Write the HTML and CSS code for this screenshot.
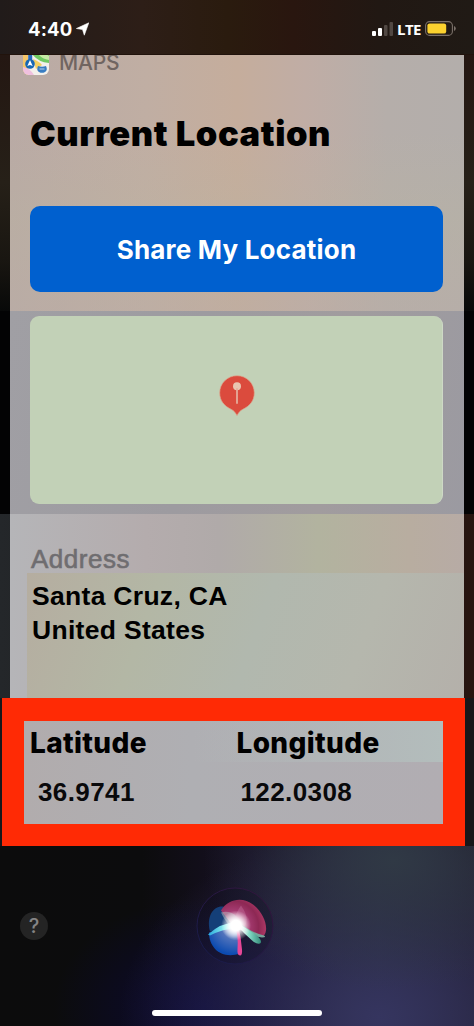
FILE: index.html
```
<!DOCTYPE html>
<html lang="en">
<head>
<meta charset="utf-8">
<title>Current Location</title>
<link rel="stylesheet" href="styles.css">
</head>
<body>
<main class="phone">
  <header class="status">
    <div class="clock">4:40
      <svg class="arrow" viewBox="0 0 13 14" width="13" height="14"><path d="M12.800.8 8.300 13.200 6.500 7.500.4 6.500z" fill="#fff" stroke="#fff" stroke-width=".6" stroke-linejoin="round"/></svg>
    </div>
    <div class="signals">
      <svg viewBox="0 0 21 14" width="21" height="14"><rect y="9" width="4" height="5" rx="1" fill="#fff"/><rect x="6" y="6" width="4" height="8" rx="1" fill="#fff"/><rect x="12" y="3" width="3.500" height="11" rx="1" fill="#514843"/><rect x="17.500" width="3.500" height="14" rx="1" fill="#514843"/></svg>
      <span class="lte">LTE</span>
      <svg viewBox="0 0 31 15" width="31" height="15"><rect x=".6" y=".6" width="26.8" height="13.8" rx="4" fill="none" stroke="#7b716a" stroke-width="1.1"/><rect x="2.4" y="2.4" width="18.8" height="10.2" rx="2.2" fill="#fcd22f"/><path d="M29 5q1.8.8 1.8 2.5T29 10z" fill="#7b716a"/></svg>
    </div>
  </header>

  <section class="row row-top">
    <div class="card card-top">
      <div class="app">
        <svg class="app-icon" viewBox="0 0 26 26" width="26" height="26">
          <defs><clipPath id="tile"><rect width="26" height="26" rx="6"/></clipPath></defs>
          <g clip-path="url(#tile)">
            <rect width="26" height="26" fill="#f3f0eb"/>
            <path d="M0 0h5v26H0z" fill="#f5c66a"/>
            <path d="M0 18q7 1 11 8H0z" fill="#efc0df"/>
            <path d="M9 0h17v14Q15 13 9 5z" fill="#70ca62"/>
            <path d="M13 0h8q1 5 5 7v4Q15 9 13 0z" fill="#c6eaa5"/>
            <path d="M10 10q7 3 9 6l-6 4z" fill="#f2cf62"/>
            <path d="M5.2 0h4v15h-4z" fill="#2769bd"/>
            <circle cx="7" cy="15" r="4.8" fill="#1767b5"/>
            <path d="m7 11 2.7 6L7 16l-2.7 1z" fill="#fff"/>
            <path d="M15 17q4 1.600 8 0 2 4-1 6-3 1.700-6 0-3-2-1-6" fill="#397dc2"/>
            <path d="M16.500 20h5" stroke="#8fb6dc" stroke-width="1.500"/>
          </g>
        </svg>
        <span class="app-name">MAPS</span>
      </div>
      <h1 class="title">Current Location</h1>
      <button class="share"><span class="share-text">Share My Location</span></button>
    </div>
  </section>

  <section class="row row-map">
    <div class="card card-map">
      <div class="map">
        <svg viewBox="0 0 36 42" width="36" height="42"><path d="M18 .7C8.300.7.7 8.300.7 17.800c0 8 4.500 13.300 11.800 16.700 2.300 1.100 3.700 2.900 5.500 6.100 1.800-3.200 3.200-5 5.500-6.100 7.300-3.400 11.800-8.700 11.800-16.700C35.300 8.300 27.700.7 18 .7z" fill="#db4b3d" stroke="#dba98f" stroke-width=".7"/><circle cx="18" cy="11.200" r="4" fill="#e9c5b0"/><path d="M18 14v14" stroke="#e5ad9b" stroke-width="1.800" stroke-linecap="round"/></svg>
      </div>
    </div>
  </section>

  <section class="row row-address">
    <div class="card card-address">
      <h2 class="label">Address</h2>
      <div class="address"><span class="city">Santa Cruz, CA</span><br><span class="country">United States</span></div>
    </div>
  </section>

  <section class="coords">
    <dl class="grid">
      <div class="cell"><dt><span class="lat">Latitude</span></dt><dd><span class="lat-value">36.9741</span></dd></div>
      <div class="cell"><dt><span class="lon">Longitude</span></dt><dd><span class="lon-value">122.0308</span></dd></div>
    </dl>
  </section>

  <footer class="footer">
    <div class="controls">
      <button class="help"><span>?</span></button>
      <svg class="orb" viewBox="0 0 80 80" width="80" height="80">
        <defs>
          <radialGradient id="pink" gradientUnits="userSpaceOnUse" cx="36" cy="38" r="32"><stop offset="0" stop-color="#ffd4ee"/><stop offset=".45" stop-color="#a83e75"/><stop offset=".8" stop-color="#8d2854"/><stop offset="1" stop-color="#a83562"/></radialGradient>
          <radialGradient id="blue" gradientUnits="userSpaceOnUse" cx="37" cy="37" r="29"><stop offset="0" stop-color="#fff"/><stop offset=".45" stop-color="#5274bc"/><stop offset="1" stop-color="#0c4bb0"/></radialGradient>
          <radialGradient id="glow"><stop offset="0" stop-color="#fff"/><stop offset=".35" stop-color="#fff"/><stop offset="1" stop-color="#fff" stop-opacity="0"/></radialGradient>
          <linearGradient id="teal" x1="0" x2="1"><stop offset="0" stop-color="#27a8dc"/><stop offset=".55" stop-color="#8cf0ef"/><stop offset="1" stop-color="#fff"/></linearGradient>
          <linearGradient id="mint" x1="0" x2="1"><stop offset="0" stop-color="#fff"/><stop offset=".5" stop-color="#82d9c4"/><stop offset="1" stop-color="#338a78"/></linearGradient>
          <linearGradient id="ring" x1="0" y1="1" x2="1" y2="0"><stop stop-color="#151d4c"/><stop offset="1" stop-color="#35143a"/></linearGradient>
        </defs>
        <circle cx="39" cy="40" r="38" fill="#090819" fill-opacity=".2" stroke="url(#ring)" stroke-width="1"/>
        <g transform="translate(1 2.500)">
          <path d="M13 43C9 27 17 17 26 18c8 2 12 15 15 24z" fill="#143f78"/>
          <path d="M12 44 40 36 43 65C25 71 12 60 12 44z" fill="url(#blue)"/>
          <path d="M24 22C31 10 46 8 56 16c9 7 14 18 13 26q-1 8-8 6L37 39z" fill="url(#pink)"/>
          <path d="M24 24q15-4 24 17-15 3-24-17" fill="#b4b4bb" fill-opacity=".55"/>
          <path d="M44 17q12 17-1 25-10-10 1-25" fill="#cf82a8" fill-opacity=".35"/>
          <path d="M11 46q13-12 28-12l3 6q-14-1-29 7" fill="url(#teal)"/>
          <path d="M42 34q14 11 25 13 3 2-2 2-14-2-23-9" fill="#75a69b"/>
          <path d="M43 36 60 47q6 6 3 8-4 1-9-4-8-7-13-13" fill="url(#mint)"/>
          <path d="M41 36q3 12 4 25 .500 6-2 6-3 0-2.500-7 1-12-2.500-23" fill="#e74797"/>
          <circle cx="39" cy="37" r="15" fill="url(#glow)"/>
        </g>
      </svg>
    </div>
    <div class="home"></div>
  </footer>
</main>
</body>
</html>
```
FILE: styles.css
```
* { box-sizing: border-box; }
body { margin: 0; background: #0d0d0d; }
h1, h2, dl, dd { margin: 0; }
button { border: 0; padding: 0; }
.phone {
  width: 474px; height: 1026px; overflow: hidden;
  display: flex; flex-direction: column;
  font-family: Inter, "Liberation Sans", sans-serif; color: #000;
}
.status {
  height: 55px; flex: none; padding: 3px 18px 0 28px;
  display: flex; justify-content: space-between; align-items: center;
  background: linear-gradient(90deg, #211b1a, #2d1e17 30%, #2a1b0e 48%, #29160f 62%, #211813 80%, #201a15);
  border-bottom: 1px solid #21130c;
}
.clock { display: flex; align-items: center; gap: 4px; color: #fff; font-size: 18.500px; font-weight: 700; letter-spacing: .2px; }
.signals { display: flex; align-items: center; gap: 4px; color: #fff; }
.lte { font-family: "Open Sans", sans-serif; font-size: 15px; font-weight: 700; line-height: 16px; letter-spacing: -.5px; }
.row { flex: none; padding: 0 10px; }
.row-top { height: 256px; background: linear-gradient(#241712, #262018 50%, #191611 80%, #080909); }
.card { height: 100%; }
.card-top {
  overflow: hidden; padding: 0 20.500px 0 20px;
  background:
    linear-gradient(180deg, transparent 30%, rgba(186,180,160,.35) 65%, rgba(186,174,165,.45)),
    linear-gradient(90deg, #b9aaa5, #c0aea3 30%, #c5ad9c 50%, #c0ada5 65%, #b5aeaa 83%, #b3aeab);
}
.app { display: flex; align-items: center; gap: 10px; height: 26px; margin: -6px 0 0 -7px; }
.app-name { font-size: 21px; line-height: 26px; padding-top: 1px; color: #706561; font-weight: 500; letter-spacing: -.2px; }
.app-icon { flex: none; }
.title { margin-top: 37px; font-size: 34.500px; line-height: 44px; font-weight: 900; letter-spacing: .58px; white-space: nowrap; }
.share {
  display: flex; align-items: center; justify-content: center;
  width: 413px; height: 86px; margin-top: 50px; padding-top: 1px; border-radius: 10px;
  background: #0060cf; color: #fff; font: 700 26px/32px Inter, sans-serif; letter-spacing: .2px;
}
.row-map { height: 203px; background: #030304; }
.card-map {
  padding: 5px 21px 9px 20px;
  background: linear-gradient(100deg, #a09fa4, #9d9ba0 40%, #a19c9e 70%, #9b9aa1);
}
.map {
  height: 188px; border-radius: 9px; background: #c2d1b7;
  display: flex; align-items: center; justify-content: center;
  padding: 0 0 29px 2px; border-right: 1px solid #ced9c6;
}
.row-address { height: 184px; background: linear-gradient(90deg, #24272a, #1b1717 60%, #27140f); }
.card-address {
  padding: 26px 0 0 17px;
  background: linear-gradient(90deg, #b5b5b8, #b4acad 30%, #b0aaa9 46%, #b2b39f 68%, #b8ada0 88%, #b7aba5);
  font-family: "Liberation Sans", Arial, sans-serif;
}
.label { font-size: 26px; line-height: 33px; height: 33px; padding: 3px 0 0 4px; font-weight: 400; letter-spacing: .5px; color: #6f6d70; -webkit-text-stroke: .6px #6f6d70; }
.address {
  height: 125px; padding: 7px 0 0 5px; font-size: 26.500px; line-height: 33.500px; font-weight: 700; letter-spacing: .3px;
  background: linear-gradient(110deg, #b5ada0, #b3b7a5 28%, #b1b8ae 52%, #b5b7ad 75%, #b4b0aa);
}
.coords { flex: none; width: 463px; height: 148px; margin-left: 2px; border: 22px solid #ff2a05; border-top-width: 23px; box-shadow: 0 0 0 30px #17171a; clip-path: inset(0 -9px 0 -2px); }
.grid {
  height: 103px; display: grid; grid-template-columns: 206.500px 1fr; padding: 4px 0 0 6px;
  background: linear-gradient(90deg, transparent 40%, #b3bdbc) 0 0 / 100% 41px no-repeat, linear-gradient(90deg, #b1acad, #afafb3 40%, #b1adb2);
}
dt { font-size: 28px; line-height: 36px; height: 50px; font-weight: 800; letter-spacing: .35px; }
dd { font: 700 26px/34px "Liberation Sans", Arial, sans-serif; color: #09090b; letter-spacing: .4px; }
.lat-value { margin-left: 8px; }
.lon-value { margin-left: 4px; }
.footer {
  flex: 1; display: flex; flex-direction: column; align-items: center; justify-content: space-between;
  padding: 40px 0 10px;
  background:
    radial-gradient(ellipse 190px 130px at 83% 8%, #303945, transparent),
    radial-gradient(ellipse 260px 190px at 80% 95%, #35355f, transparent),
    radial-gradient(ellipse 150px 110px at 43% 90%, #0c0935, transparent),
    linear-gradient(90deg, #0c0c0c, #0c0c0d 30%, #171025 53%, #25243a 80%, #1d1928);
}
.controls { width: 100%; display: grid; grid-template-columns: 176px 80px; padding-left: 20px; align-items: center; }
.help { width: 28px; height: 28px; border-radius: 50%; background: #242424; color: #858585; font: 500 20px/28px Inter, sans-serif; }
.home { width: 170px; height: 6px; border-radius: 3px; background: #fff; }
```
